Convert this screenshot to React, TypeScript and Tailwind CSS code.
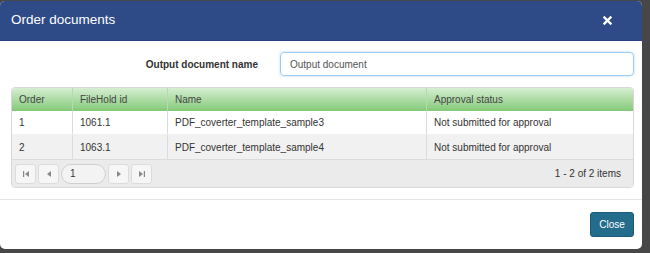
const columns = [
  { key: "order", label: "Order", width: "w-[60px]" },
  { key: "id", label: "FileHold id", width: "w-[95px]" },
  { key: "name", label: "Name", width: "w-[259px]" },
  { key: "status", label: "Approval status", width: "flex-1" },
];

const rows = [
  { order: "1", id: "1061.1", name: "PDF_coverter_template_sample3", status: "Not submitted for approval" },
  { order: "2", id: "1063.1", name: "PDF_coverter_template_sample4", status: "Not submitted for approval" },
];

const PagerButton = ({ children }: { children: React.ReactNode }) => (
  <button
    type="button"
    className="flex h-[20px] w-[21px] items-center justify-center rounded-[3px] border border-[#dcdcdc] bg-[#f6f6f6] text-[#8a8a8a]"
  >
    {children}
  </button>
);

const Tri = ({ dir }: { dir: "left" | "right" }) => (
  <svg width="4" height="6" viewBox="0 0 4 6">
    {dir === "left" ? <path d="M4 0 L0 3 L4 6 Z" fill="#888" /> : <path d="M0 0 L4 3 L0 6 Z" fill="#888" />}
  </svg>
);

const Edge = ({ dir }: { dir: "left" | "right" }) => (
  <svg width="6" height="6" viewBox="0 0 6 6">
    {dir === "left" ? (
      <>
        <rect x="0" y="0" width="1.2" height="6" fill="#888" />
        <path d="M6 0 L2 3 L6 6 Z" fill="#888" />
      </>
    ) : (
      <>
        <path d="M0 0 L4 3 L0 6 Z" fill="#888" />
        <rect x="4.8" y="0" width="1.2" height="6" fill="#888" />
      </>
    )}
  </svg>
);

export default function App() {
  return (
    <div
      className="h-[253px] w-[650px] bg-[#474747] pr-[8px] pt-[1px] pb-[4px]"
      style={{ fontFamily: '"Liberation Sans", Arial, sans-serif' }}
    >
      <div className="flex h-full flex-col overflow-hidden rounded-[5px] bg-white">
        {/* header */}
        <div className="flex h-[40px] items-center justify-between border-b border-[#27427a] bg-[#2e4b87] pl-[11px] pr-[30px]">
          <span className="text-[13.5px] text-white">Order documents</span>
          <svg width="9" height="9" viewBox="0 0 9 9">
            <path d="M1.5 1.5 L7.5 7.5 M7.5 1.5 L1.5 7.5" stroke="#fff" strokeWidth="2.4" strokeLinecap="square" />
          </svg>
        </div>

        {/* body */}
        <div className="flex-1 pl-[11px] pr-[8px] pt-[11px]">
          <div className="flex items-center">
            <label className="w-[247px] text-right text-[10px] font-bold text-[#333]">Output document name</label>
            <div className="ml-[22px] flex h-[24px] flex-1 items-center rounded-[4px] border border-[#9fcbee] px-[9px] text-[10px] text-[#555] shadow-[0_0_3px_rgba(102,175,233,0.4)]">
              Output document
            </div>
          </div>

          <div className="mt-[11px] overflow-hidden rounded-[4px] border border-[#d8d8d8] text-[10px] text-[#333]">
            <div className="flex h-[23px] bg-gradient-to-b from-[#d6eed2] to-[#83c978] text-[#444]">
              {columns.map((c, i) => (
                <div
                  key={c.key}
                  className={`${c.width} flex items-center px-[7px] ${i > 0 ? "border-l border-[#b6d9ae]" : ""}`}
                >
                  {c.label}
                </div>
              ))}
            </div>
            {rows.map((r, ri) => (
              <div key={r.order} className={`flex h-[24px] ${ri % 2 ? "bg-[#f1f1f1]" : "bg-white"} ${ri > 0 ? "" : "border-b border-[#f1f1f1]"}`}>
                {columns.map((c, i) => (
                  <div
                    key={c.key}
                    className={`${c.width} flex items-center px-[7px] ${i > 0 ? "border-l border-[#dcdcdc]" : ""}`}
                  >
                    {r[c.key as keyof typeof r]}
                  </div>
                ))}
              </div>
            ))}
            <div className="flex h-[28px] items-center justify-between border-t border-[#dcdcdc] bg-[#ebebeb] pl-[3px] pr-[12px]">
              <div className="flex items-center gap-[2px]">
                <PagerButton>
                  <Edge dir="left" />
                </PagerButton>
                <PagerButton>
                  <Tri dir="left" />
                </PagerButton>
                <div className="flex h-[20px] w-[45px] items-center rounded-full border border-[#cfcfcf] bg-[#f3f3f3] px-[8px] text-[10px] text-[#333]">
                  1
                </div>
                <PagerButton>
                  <Tri dir="right" />
                </PagerButton>
                <PagerButton>
                  <Edge dir="right" />
                </PagerButton>
              </div>
              <span className="text-[10px] text-[#333]">1 - 2 of 2 items</span>
            </div>
          </div>
        </div>

        {/* footer */}
        <div className="flex h-[50px] items-center justify-end border-t border-[#e5e5e5] px-[8px]">
          <button
            type="button"
            className="h-[25px] w-[44px] rounded-[3px] border border-[#1a5a76] bg-[#236c8c] text-[10px] text-white"
          >
            Close
          </button>
        </div>
      </div>
    </div>
  );
}
